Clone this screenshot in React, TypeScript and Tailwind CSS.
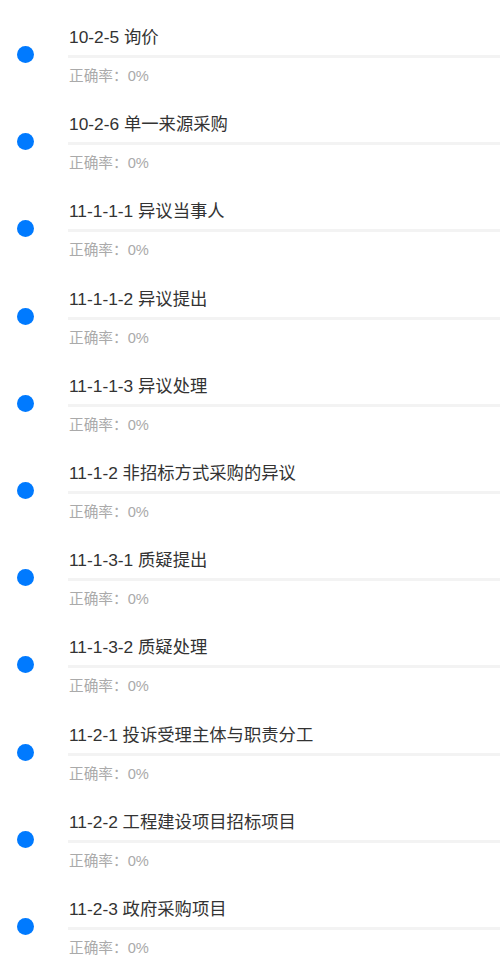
import React from 'react';

const items = [
  '10-2-5 询价',
  '10-2-6 单一来源采购',
  '11-1-1-1 异议当事人',
  '11-1-1-2 异议提出',
  '11-1-1-3 异议处理',
  '11-1-2 非招标方式采购的异议',
  '11-1-3-1 质疑提出',
  '11-1-3-2 质疑处理',
  '11-2-1 投诉受理主体与职责分工',
  '11-2-2 工程建设项目招标项目',
  '11-2-3 政府采购项目',
];

export default function App() {
  return (
    <div
      className="w-[500px] h-[979px] overflow-hidden bg-white"
      style={{ fontFamily: '"Liberation Sans", "Noto Sans CJK SC", sans-serif' }}
    >
      {items.map((title) => (
        <div key={title} className="flex h-[87.2px] pt-[26px]">
          <div className="w-[68px] shrink-0 pl-[17px]">
            <div className="mt-[20px] w-[17px] h-[17px] rounded-full bg-[#007aff]" />
          </div>
          <div className="flex-1 min-w-0">
            <div className="text-[17.33px] leading-[22px] text-[#333333] pl-[1px] whitespace-nowrap">{title}</div>
            <div className="mt-[7px] h-[3px] bg-[#f3f3f3]" />
            <div className="mt-[8px] text-[14.67px] leading-[20px] text-[#aaaaaa] pl-[1px]">正确率：0%</div>
          </div>
        </div>
      ))}
    </div>
  );
}
